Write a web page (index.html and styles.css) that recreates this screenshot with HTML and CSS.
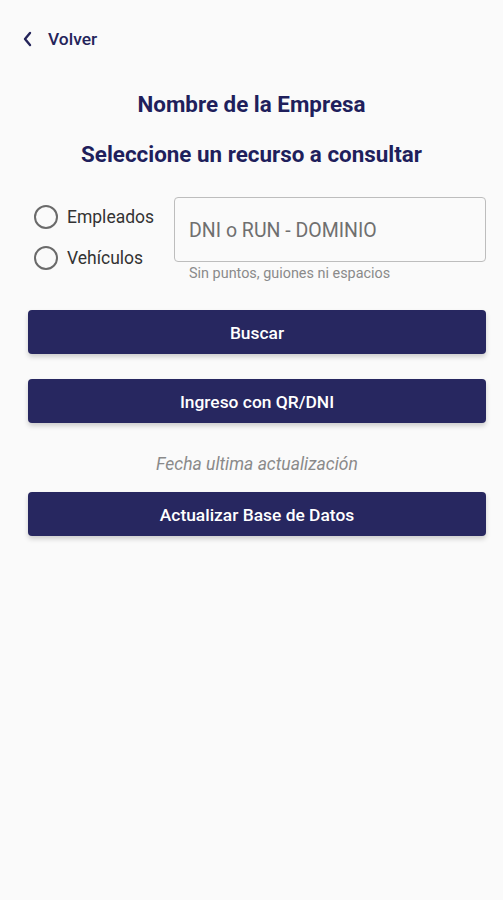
FILE: index.html
```html
<!DOCTYPE html>
<html lang="es">
<head>
    <meta charset="UTF-8">
    <title>Consulta</title>
    <link rel="stylesheet" href="styles.css">
</head>
<body>
    <div class="topbar">
        <a class="back" href="#">
            <svg width="12" height="16" viewBox="0 0 12 16"><path d="M8 2 L3 8 L8 14" fill="none" stroke="#24245a" stroke-width="2.4" stroke-linecap="round" stroke-linejoin="round"/></svg>
            <span>Volver</span>
        </a>
    </div>

    <h2 class="company">Nombre de la Empresa</h2>
    <h2 class="subtitle">Seleccione un recurso a consultar</h2>

    <div class="search-row">
        <div class="radios">
            <label class="radio"><span class="circle"></span>Empleados</label>
            <label class="radio"><span class="circle"></span>Vehículos</label>
        </div>
        <div class="field">
            <div class="input">DNI o RUN - DOMINIO</div>
            <div class="hint">Sin puntos, guiones ni espacios</div>
        </div>
    </div>

    <div class="actions">
        <button class="btn">Buscar</button>
        <button class="btn">Ingreso con QR/DNI</button>
        <p class="updated">Fecha ultima actualización</p>
        <button class="btn">Actualizar Base de Datos</button>
    </div>
</body>
</html>
```

FILE: styles.css
```css
body {
    margin: 0;
    background-color: #fafafa;
    font-family: Roboto, "Liberation Sans", sans-serif;
    color: #222;
    height: 900px;
}
.topbar {
    padding: 28px 0 0 22px;
    height: 22px;
}
.back {
    display: flex;
    align-items: center;
    gap: 14px;
    text-decoration: none;
    color: #24245a;
    font-size: 17.4px;
    font-weight: 500;
    line-height: 22px;
}
.company {
    margin: 40px 0 0;
    text-align: center;
    font-size: 22.4px;
    font-weight: 700;
    color: #1f1f5c;
    line-height: 28px;
}
.subtitle {
    margin: 22px 0 0;
    text-align: center;
    font-size: 22.4px;
    font-weight: 700;
    color: #1f1f5c;
    line-height: 28px;
}
.search-row {
    display: flex;
    margin: 29px 17px 0 34px;
    gap: 20px;
}
.radios {
    display: flex;
    flex-direction: column;
    gap: 16px;
    padding-top: 7px;
}
.radio {
    display: flex;
    align-items: center;
    gap: 9px;
    font-size: 17.5px;
    color: #333;
    height: 25px;
}
.circle {
    border: 2px solid #6a6a6a;
    border-radius: 50%;
    box-sizing: border-box;
    width: 24px;
    height: 24px;
}
.field {
    flex: 1;
}
.input {
    height: 65px;
    box-sizing: border-box;
    border: 1px solid #bdbdbd;
    border-radius: 4px;
    padding: 2px 14px 0;
    display: flex;
    align-items: center;
    font-size: 19.5px;
    color: #6f6f6f;
    background: #fafafa;
}
.hint {
    margin: 4px 0 0 15px;
    font-size: 14.4px;
    line-height: 16px;
    color: #8a8a8a;
}
.actions {
    margin: 28px 17px 0 28px;
    display: flex;
    flex-direction: column;
}
.btn {
    height: 44px;
    border: none;
    border-radius: 4px;
    background-color: #272760;
    color: #fff;
    font-family: Roboto, "Liberation Sans", sans-serif;
    font-size: 17.4px;
    font-weight: 500;
    padding-top: 2px;
    box-shadow: 0 3px 5px rgba(0, 0, 0, 0.18);
    margin-bottom: 25px;
}
.updated {
    margin: 6px 0 18px;
    text-align: center;
    font-style: italic;
    font-size: 17.5px;
    color: #8a8a8a;
    line-height: 20px;
}
```
